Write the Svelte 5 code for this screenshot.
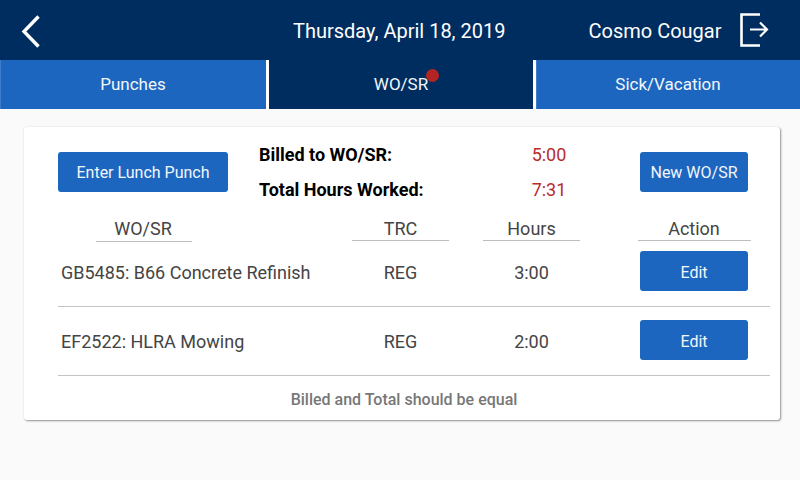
<script>
  const tabs = [
    { label: 'Punches' },
    { label: 'WO/SR', active: true, dot: true },
    { label: 'Sick/Vacation' },
  ];

  const rows = [
    { name: 'GB5485: B66 Concrete Refinish', trc: 'REG', hours: '3:00' },
    { name: 'EF2522: HLRA Mowing', trc: 'REG', hours: '2:00' },
  ];
</script>

<div class="page">
  <header class="topbar">
    <button class="icon-btn back" aria-label="Back">
      <svg viewBox="0 0 20 34" width="20" height="34">
        <path d="M17.5 1.5 L3 16.5 L17.5 31.5" fill="none" stroke="#fff" stroke-width="3.4"/>
      </svg>
    </button>
    <div class="date">Thursday, April 18, 2019</div>
    <div class="user">Cosmo Cougar</div>
    <button class="icon-btn logout" aria-label="Log out">
      <svg viewBox="0 0 30 34" width="30" height="34">
        <path d="M20 1.5 H1.5 V32.5 H20" fill="none" stroke="#fff" stroke-width="2.6"/>
        <path d="M10 16.5 H27 M20 9.5 L27 16.5 L20 23.5" fill="none" stroke="#fff" stroke-width="2.2"/>
      </svg>
    </button>
  </header>

  <nav class="tabs">
    {#each tabs as tab}
      <div class="tab" class:active={tab.active}>
        <span class="tab-label">
          {tab.label}
          {#if tab.dot}<span class="dot"></span>{/if}
        </span>
      </div>
    {/each}
  </nav>

  <main class="content">
    <section class="card">
      <div class="summary">
        <button class="btn lunch">Enter Lunch Punch</button>
        <div class="totals">
          <div class="total-row">
            <span class="total-label">Billed to WO/SR:</span>
            <span class="total-value">5:00</span>
          </div>
          <div class="total-row">
            <span class="total-label">Total Hours Worked:</span>
            <span class="total-value">7:31</span>
          </div>
        </div>
        <button class="btn new">New WO/SR</button>
      </div>

      <div class="grid head">
        <div class="th first">WO/SR</div>
        <div class="th">TRC</div>
        <div class="th">Hours</div>
        <div class="th action">Action</div>
      </div>

      {#each rows as row}
        <div class="grid row">
          <div class="name">{row.name}</div>
          <div class="cell">{row.trc}</div>
          <div class="cell">{row.hours}</div>
          <div class="cell action"><button class="btn edit">Edit</button></div>
        </div>
      {/each}

      <div class="note">Billed and Total should be equal</div>
    </section>
  </main>
</div>

<style>
  :global(body) {
    margin: 0;
    background: #fafafa;
    font-family: Roboto, "Noto Sans", sans-serif;
  }

  .page {
    width: 800px;
    height: 480px;
    overflow: hidden;
    background: #fafafa;
  }

  /* header */
  .topbar {
    height: 60px;
    background: #002d5f;
    color: #fff;
    display: flex;
    align-items: center;
    font-size: 20px;
  }
  .icon-btn {
    background: none;
    border: 0;
    padding: 0;
    display: flex;
  }
  .back { margin-left: 21px; margin-top: 4px; }
  .date { margin-left: 252px; margin-top: 2px; }
  .user { margin-left: 83px; margin-top: 2px; }
  .logout { margin-left: 19px; margin-top: 0; }

  /* tabs */
  .tabs {
    height: 49px;
    display: flex;
    background: #fff;
  }
  .tab {
    width: 264px;
    padding-bottom: 1px;
    box-sizing: border-box;
    background: #1d66c0;
    color: #f2f6fb;
    font-size: 17px;
    display: flex;
    align-items: center;
    justify-content: center;
    box-shadow: inset 1px 0 0 #3f7cc9;
  }
  .tab:first-child { width: 266px; }
  .tab + .tab { margin-left: 3px; }
  .tab.active {
    background: #002d5f;
    box-shadow: none;
  }
  .tab-label { position: relative; }
  .dot {
    position: absolute;
    top: -5px;
    right: -11px;
    width: 13px;
    height: 13px;
    border-radius: 50%;
    background: #b32424;
  }

  /* card */
  .content { padding: 18px 20px 0 24px; }
  .card {
    height: 293px;
    box-sizing: border-box;
    padding: 0 10px 0 34px;
    background: #fff;
    border-radius: 3px;
    box-shadow: 1px 1px 2px rgba(0, 0, 0, 0.4), 0 0 2px rgba(0, 0, 0, 0.1);
  }

  .btn {
    background: #1d66c0;
    color: #f2f6fb;
    border: 0;
    border-radius: 3px;
    height: 40px;
    padding: 0;
    font: inherit;
    font-size: 16px;
  }
  .summary {
    display: flex;
    align-items: flex-start;
    height: 87px;
  }
  .lunch { width: 170px; margin-top: 25px; }
  .new { width: 108px; margin-top: 25px; }
  .totals { width: 412px; padding: 18px 0 0 31px; box-sizing: border-box; }
  .total-row {
    display: flex;
    height: 35px;
    font-size: 18px;
    line-height: 20px;
  }
  .total-label {
    width: 243px;
    font-weight: 700;
    color: #000;
  }
  .total-value {
    width: 94px;
    text-align: center;
    color: #b92c2c;
    font-size: 18px;
  }

  .grid {
    display: grid;
    grid-template-columns: 294px 131px 155px 113px;
  }
  .head { height: 27px; }
  .th {
    width: 97px;
    height: 27px;
    box-sizing: border-box;
    border-bottom: 1px solid #bdbdbd;
    text-align: center;
    font-size: 18px;
    line-height: 30px;
    color: #444;
  }
  .th.first { margin-left: 38px; width: 96px; height: 28px; padding-right: 2px; }
  .th.action { width: 113px; padding-right: 1px; }

  .row {
    height: 66px;
    padding-top: 10px;
    width: 712px;
    border-bottom: 1px solid #c4c4c4;
    box-sizing: border-box;
    font-size: 18px;
    line-height: 44px;
    color: #444;
  }
  .row + .row { height: 69px; padding-top: 13px; }
  .name { padding-left: 3px; white-space: nowrap; }
  .cell { width: 97px; text-align: center; }
  .cell.action { width: 113px; }
  .edit { width: 108px; display: block; margin-left: 2px; padding-bottom: 3px; }

  .note {
    width: 692px;
    text-align: center;
    padding-top: 14px;
    font-size: 16px;
    font-weight: 500;
    color: #777;
  }
</style>
